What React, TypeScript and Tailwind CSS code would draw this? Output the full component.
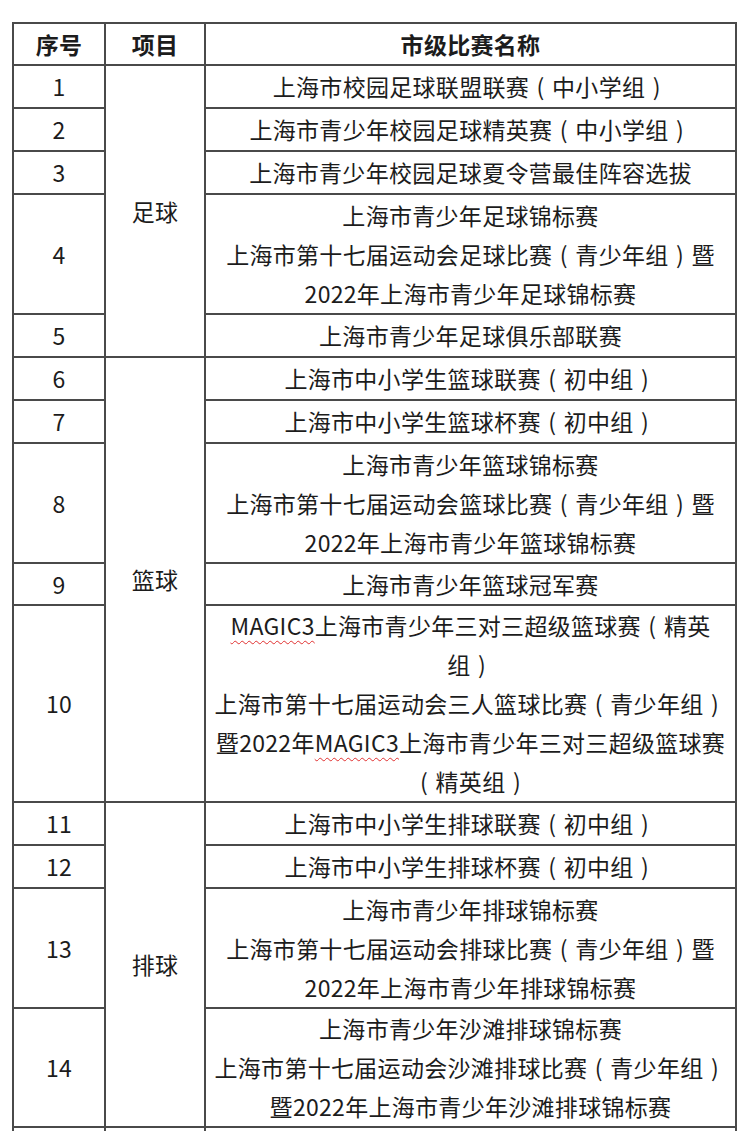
import React from 'react';

type Row = {
  no: string;
  lines: React.ReactNode[];
  h: string;
  sport?: { name: string; span: number };
};

const Magic = () => (
  <span className="underline decoration-wavy decoration-[#e03030] decoration-1 underline-offset-[5px]">MAGIC3</span>
);

// full-width brackets drawn centred in their em box, like the source font
const fmt = (s: string) =>
  s.split(/([（）])/).map((part, i) =>
    part === '（' || part === '）' ? (
      <span key={i} className="inline-block w-[1em] text-center">
        {part === '（' ? '(' : ')'}
      </span>
    ) : (
      <React.Fragment key={i}>{part}</React.Fragment>
    )
  );

const one = 'h-[43px]';
const three = 'h-[120px]';

const rows: Row[] = [
  { no: '1', h: one, lines: ['上海市校园足球联盟联赛（中小学组）'], sport: { name: '足球', span: 5 } },
  { no: '2', h: one, lines: ['上海市青少年校园足球精英赛（中小学组）'] },
  { no: '3', h: one, lines: ['上海市青少年校园足球夏令营最佳阵容选拔'] },
  {
    no: '4',
    h: three,
    lines: ['上海市青少年足球锦标赛', '上海市第十七届运动会足球比赛（青少年组）暨', '2022年上海市青少年足球锦标赛'],
  },
  { no: '5', h: one, lines: ['上海市青少年足球俱乐部联赛'] },
  { no: '6', h: one, lines: ['上海市中小学生篮球联赛（初中组）'], sport: { name: '篮球', span: 5 } },
  { no: '7', h: one, lines: ['上海市中小学生篮球杯赛（初中组）'] },
  {
    no: '8',
    h: three,
    lines: ['上海市青少年篮球锦标赛', '上海市第十七届运动会篮球比赛（青少年组）暨', '2022年上海市青少年篮球锦标赛'],
  },
  { no: '9', h: 'h-[42px]', lines: ['上海市青少年篮球冠军赛'] },
  {
    no: '10',
    h: 'h-[196px]',
    lines: [
      <><Magic />{fmt('上海市青少年三对三超级篮球赛（精英')}</>,
      '组）',
      '上海市第十七届运动会三人篮球比赛（青少年组）',
      <>暨2022年<Magic />上海市青少年三对三超级篮球赛</>,
      '（精英组）',
    ],
  },
  { no: '11', h: one, lines: ['上海市中小学生排球联赛（初中组）'], sport: { name: '排球', span: 4 } },
  { no: '12', h: one, lines: ['上海市中小学生排球杯赛（初中组）'] },
  {
    no: '13',
    h: three,
    lines: ['上海市青少年排球锦标赛', '上海市第十七届运动会排球比赛（青少年组）暨', '2022年上海市青少年排球锦标赛'],
  },
  {
    no: '14',
    h: 'h-[119px]',
    lines: ['上海市青少年沙滩排球锦标赛', '上海市第十七届运动会沙滩排球比赛（青少年组）', '暨2022年上海市青少年沙滩排球锦标赛'],
  },
];

const cell = 'border-2 border-[#4a4a4a] text-center align-middle p-0';

export default function App() {
  return (
    <div
      className="min-h-screen bg-white pt-[22px] pl-[12px] text-[#1c1c1c] text-[23px] leading-[39px] tracking-[0.3px]"
      style={{ fontFamily: '"Noto Sans CJK SC", "Noto Sans", sans-serif' }}
    >
      <table className="border-collapse table-fixed w-[725px]">
        <colgroup>
          <col className="w-[92px]" />
          <col className="w-[100px]" />
          <col />
        </colgroup>
        <thead>
          <tr className="font-bold h-[42px]">
            <th className={cell}>序号</th>
            <th className={cell}>项目</th>
            <th className={cell}>市级比赛名称</th>
          </tr>
        </thead>
        <tbody>
          {rows.map((r) => (
            <tr key={r.no} className={r.h}>
              <td className={cell}>{r.no}</td>
              {r.sport && (
                <td className={cell} rowSpan={r.sport.span}>
                  {r.sport.name}
                </td>
              )}
              <td className={cell}>
                {r.lines.map((l, i) => (
                  <div key={i} className="whitespace-nowrap">
                    {typeof l === 'string' ? fmt(l) : l}
                  </div>
                ))}
              </td>
            </tr>
          ))}
          {/* next row, continues below the fold */}
          <tr className="h-[43px]">
            <td className={cell} />
            <td className={cell} />
            <td className={cell} />
          </tr>
        </tbody>
      </table>
    </div>
  );
}
